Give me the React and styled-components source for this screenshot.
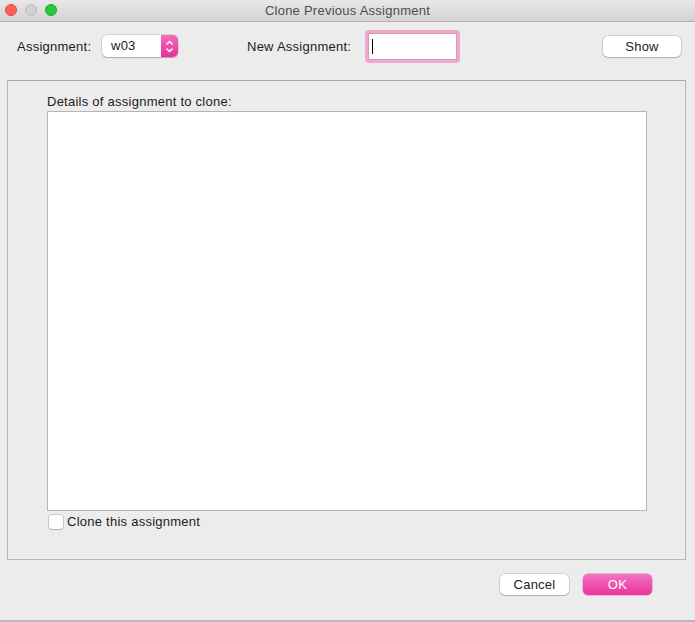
import React from "react";
import styled, { createGlobalStyle } from "styled-components";

const Global = createGlobalStyle`
  html, body { margin: 0; padding: 0; background: #ececec; }
  body { font-family: "Liberation Sans", Arial, sans-serif; font-size: 13px; color: #1a1a1a; letter-spacing: 0.25px; }
  * { box-sizing: border-box; }
`;

const Window = styled.div`
  width: 695px;
  height: 622px;
  background: #ececec;
  display: flex;
  flex-direction: column;
  border-bottom: 2px solid #b9b9b9;
`;

const TitleBar = styled.div`
  height: 22px;
  flex: none;
  background: linear-gradient(#e8e8e8, #d3d3d3);
  border-bottom: 1px solid #b1b1b1;
  display: flex;
  align-items: center;
  position: relative;
  padding-left: 5px;
  gap: 8px;
`;

const Light = styled.span`
  width: 12px;
  height: 12px;
  border-radius: 50%;
  background: ${(p) => p.$c};
  border: 1px solid ${(p) => p.$b};
  position: relative;
  top: -1px;
`;

const Title = styled.div`
  position: absolute;
  left: 0;
  right: 0;
  text-align: center;
  color: #4d4d4d;
  font-size: 13px;
  top: 3px;
`;

const TopRow = styled.div`
  display: flex;
  align-items: center;
  height: 46px;
  padding: 0 14px 0 17px;
  margin-top: 1px;
`;

const Label = styled.span`
  font-size: 13px;
  color: #1c1c1c;
  white-space: nowrap;
  width: ${(p) => (p.$w ? `${p.$w}px` : "auto")};
  flex: none;
`;

const Popup = styled.div`
  width: 76px;
  height: 22px;
  display: flex;
  border-radius: 5px;
  background: #fff;
  box-shadow: 0 0 0 0.5px rgba(0,0,0,0.2), 0 1px 1px rgba(0,0,0,0.2);
  overflow: hidden;
  margin-right: 69px;
  flex: none;
`;

const PopupText = styled.div`
  flex: 1;
  padding-left: 9px;
  line-height: 22px;
  font-size: 13px;
`;

const Stepper = styled.div`
  width: 17px;
  background: linear-gradient(#f26cbd, #e9309c);
  display: flex;
  align-items: center;
  justify-content: center;
`;

const InputRing = styled.div`
  width: 95px;
  height: 33px;
  border-radius: 4px;
  background: #f1a8cf;
  padding: 3px;
  flex: none;
`;

const Input = styled.div`
  width: 100%;
  height: 100%;
  background: #fff;
  border: 1px solid #d69ab9;
  display: flex;
  align-items: center;
  padding-left: 3px;
`;

const Caret = styled.span`
  width: 1px;
  height: 15px;
  background: #000;
`;

const Spacer = styled.div`
  flex: 1;
`;

const Button = styled.button`
  font-family: inherit;
  font-size: 13px;
  letter-spacing: 0.25px;
  width: ${(p) => p.$w}px;
  height: 21px;
  border-radius: 5px;
  border: none;
  padding: 0;
  background: ${(p) => (p.$primary ? "linear-gradient(#f272c0, #eb339f)" : "#fff")};
  color: ${(p) => (p.$primary ? "#fff" : "#1c1c1c")};
  box-shadow: ${(p) =>
    p.$primary
      ? "0 0 0 0.5px rgba(200,30,130,0.5)"
      : "0 0 0 0.5px rgba(0,0,0,0.25), 0 1px 1px rgba(0,0,0,0.15)"};
`;

const Panel = styled.div`
  margin: 11px 9px 0 7px;
  height: 480px;
  border: 1px solid #b5b5b5;
  border-top-color: #a8a8a8;
  padding: 13px 0 0 39px;
  display: flex;
  flex-direction: column;
`;

const PanelLabel = styled.div`
  font-size: 13px;
  line-height: 16px;
  height: 16px;
  color: #1c1c1c;
`;

const TextArea = styled.div`
  margin-top: 1px;
  width: 600px;
  height: 400px;
  background: #fff;
  border: 1px solid #b4b4b4;
`;

const CheckRow = styled.label`
  display: flex;
  align-items: center;
  gap: 4px;
  margin-top: 3px;
  padding-left: 2px;
  font-size: 13px;
  color: #1c1c1c;
`;

const Box = styled.span`
  width: 14px;
  height: 14px;
  border-radius: 3px;
  background: #fff;
  box-shadow: 0 0 0 0.5px rgba(0,0,0,0.3), 0 1px 1px rgba(0,0,0,0.12);
`;

const Footer = styled.div`
  display: flex;
  justify-content: flex-end;
  gap: 14px;
  padding: 14px 43px 0 0;
`;

export default function App() {
  return (
    <>
      <Global />
      <Window>
        <TitleBar>
          <Light $c="#fe5f57" $b="#e0443e" />
          <Light $c="#d0d0d0" $b="#bdbdbd" />
          <Light $c="#28c840" $b="#1aab29" />
          <Title>Clone Previous Assignment</Title>
        </TitleBar>
        <TopRow>
          <Label $w={85}>Assignment:</Label>
          <Popup>
            <PopupText>w03</PopupText>
            <Stepper>
              <svg width="9" height="13" viewBox="0 0 9 13">
                <path d="M1.5 4.5 L4.5 1.5 L7.5 4.5 M1.5 8.5 L4.5 11.5 L7.5 8.5" fill="none" stroke="#fff" strokeWidth="1.4" />
              </svg>
            </Stepper>
          </Popup>
          <Label $w={118}>New Assignment:</Label>
          <InputRing>
            <Input>
              <Caret />
            </Input>
          </InputRing>
          <Spacer />
          <Button $w={78}>Show</Button>
        </TopRow>
        <Panel>
          <PanelLabel>Details of assignment to clone:</PanelLabel>
          <TextArea />
          <CheckRow>
            <Box />
            Clone this assignment
          </CheckRow>
        </Panel>
        <Footer>
          <Button $w={69}>Cancel</Button>
          <Button $w={69} $primary>OK</Button>
        </Footer>
      </Window>
    </>
  );
}
